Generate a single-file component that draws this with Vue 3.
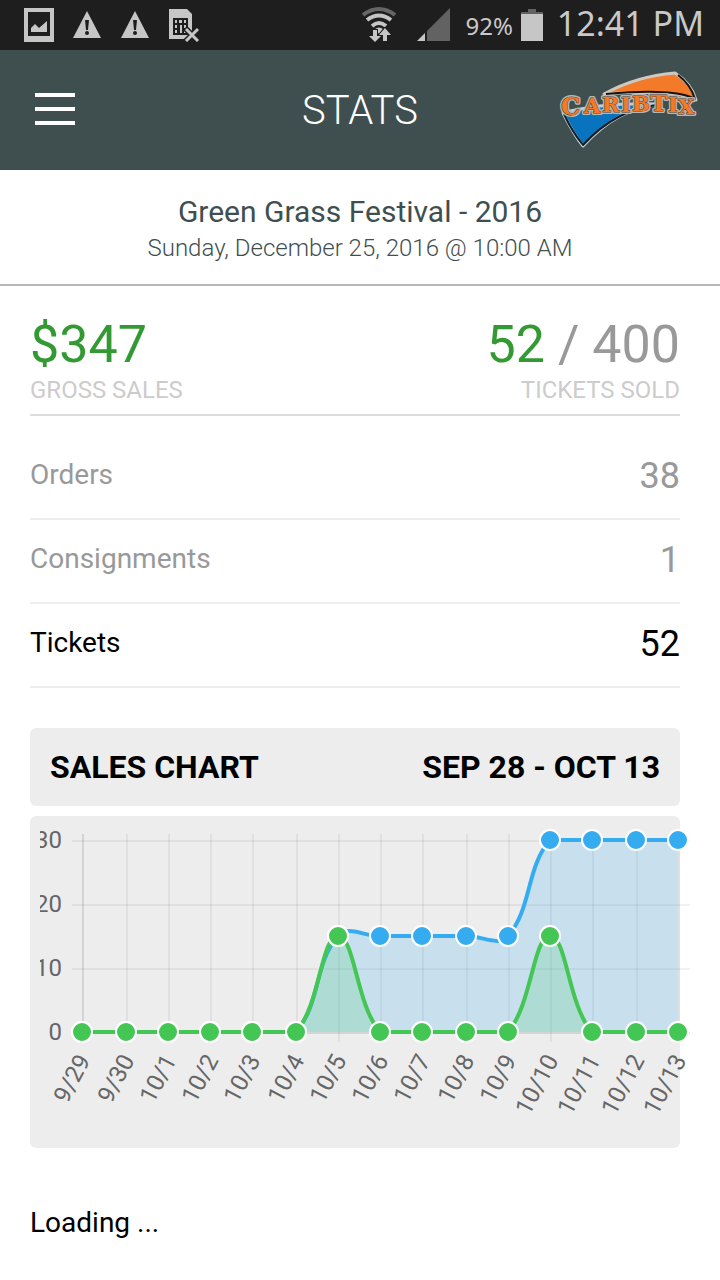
<script setup>
const stats = [
  { label: 'Orders', value: 38 },
  { label: 'Consignments', value: 1 },
  { label: 'Tickets', value: 52, active: true },
]

const days = ['9/29', '9/30', '10/1', '10/2', '10/3', '10/4', '10/5', '10/6', '10/7', '10/8', '10/9', '10/10', '10/11', '10/12', '10/13']
const totals = [0, 0, 0, 0, 0, 0, 15, 15, 15, 15, 15, 30, 30, 30, 30]
const daily = [0, 0, 0, 0, 0, 0, 15, 0, 0, 0, 0, 15, 0, 0, 0]
const ticks = [30, 20, 10, 0]

const columns = [42, 86, 128, 170, 212, 256, 298, 340, 382, 426, 468, 510, 552, 596, 638]
const left = 42
const right = 638
const top = 14
const bottom = 206
const yAt = (v) => bottom - (v * (bottom - top)) / 30
const toPoints = (values) => values.map((v, i) => ({ x: columns[i], y: yAt(v) }))
const clamp = (y) => Math.min(bottom, Math.max(top, y))

function curve(points) {
  const tension = 0.4
  const controls = points.map((p, i) => {
    const a = points[i - 1] || p
    const b = points[i + 1] || p
    const before = Math.hypot(p.x - a.x, p.y - a.y)
    const after = Math.hypot(b.x - p.x, b.y - p.y)
    const fa = (tension * before) / (before + after)
    const fb = (tension * after) / (before + after)
    return {
      inX: p.x - fa * (b.x - a.x),
      inY: clamp(p.y - fa * (b.y - a.y)),
      outX: p.x + fb * (b.x - a.x),
      outY: clamp(p.y + fb * (b.y - a.y)),
    }
  })
  let d = `M${points[0].x} ${points[0].y}`
  for (let i = 1; i < points.length; i++) {
    const c = controls[i - 1]
    const n = controls[i]
    d += ` C${c.outX} ${c.outY} ${n.inX} ${n.inY} ${points[i].x} ${points[i].y}`
  }
  return d
}

const series = [
  { name: 'total', points: toPoints(totals) },
  { name: 'daily', points: toPoints(daily) },
].map((s) => {
  const line = curve(s.points)
  return { ...s, line, area: `${line} L${right} ${bottom} L${left} ${bottom} Z` }
})
</script>

<template>
  <div class="screen">
    <div class="status">
      <div class="notices">
        <svg width="30" height="34" viewBox="0 0 30 34" aria-hidden="true">
          <path fill="#c6c6c6" fill-rule="evenodd" d="M0 0H30V34H0ZM4 4V28H26V4Z" />
          <path fill="#c6c6c6" d="M7 20L11 16L15 20L23 13V24H7Z" />
        </svg>
        <svg v-for="n in 2" :key="n" width="30" height="34" viewBox="0 0 30 34" aria-hidden="true">
          <path fill="#c6c6c6" d="M15 3L29 30H1Z" />
          <path fill="#1e1e1e" d="M13 12H17L16 22H14Z" />
          <circle cx="15" cy="25" r="2" fill="#1e1e1e" />
        </svg>
        <svg width="32" height="34" viewBox="0 0 32 34" aria-hidden="true">
          <path fill="#c6c6c6" d="M1 1H19L24 6V31H1Z" />
          <path fill="#1e1e1e" d="M5 10H20V27H5Z" />
          <path fill="#c6c6c6" d="M7 12h2v3H7zM7 17h2v3H7zM7 22h2v3H7zM11 12h3v3h-3zM12 17h2v8h-2zM16 12h2v3h-2zM16 17h2v3h-2zM16 22h2v3h-2z" />
          <path stroke="#1e1e1e" stroke-width="6" d="M17 20L31 34M31 20L17 34" />
          <path stroke="#c6c6c6" stroke-width="3" d="M18 21L30 33M30 21L18 33" />
        </svg>
      </div>
      <div class="system">
        <svg class="wifi" width="36" height="38" viewBox="0 0 36 38" fill="none" aria-hidden="true">
          <path stroke="#666" stroke-width="4" d="M2 9Q18 -3 34 9" />
          <path stroke="#c6c6c6" stroke-width="4" d="M6 14Q18 5 30 14M11 20Q18 14 25 20" />
          <path fill="#c6c6c6" d="M14 23Q18 20 22 23L18 28Z" />
          <path stroke="#1e1e1e" stroke-width="2" fill="#c6c6c6" paint-order="stroke" d="M12 24H16V30H20L14 36L8 30H12ZM22 35H26V29H30L24 22L18 29H22Z" />
        </svg>
        <svg class="signal" width="34" height="34" viewBox="0 0 34 34" aria-hidden="true">
          <path fill="#626262" d="M33 0V33H10V23Z" />
          <path fill="#c6c6c6" d="M8 25V33H0Z" />
        </svg>
        <span class="percent">92%</span>
        <svg class="battery" width="22" height="32" viewBox="0 0 22 32" aria-hidden="true">
          <path fill="#626262" d="M7 0H15V3H22V6H0V3H7Z" />
          <path fill="#c6c6c6" d="M0 5H22V32H0Z" />
        </svg>
        <span class="clock">12:41 PM</span>
      </div>
    </div>

    <header class="bar">
      <button class="menu" type="button" aria-label="Menu"><i></i><i></i><i></i></button>
      <h1>STATS</h1>
      <svg class="logo" width="140" height="80" viewBox="0 0 140 80" role="img" aria-label="CaribTix">
        <g stroke-linejoin="round">
          <path fill="#0873be" stroke="#c3cdd1" stroke-width="3" d="M3 43C32 35 66 33 99 34C70 38 47 50 23 76C15 66 9 55 3 43Z" />
          <path fill="none" stroke="#101c28" stroke-width="2" d="M4 44C9 55 15 65 23 75C47 49 70 39 96 35" />
          <path fill="#f27a29" stroke="#cfc8bf" stroke-width="3" d="M44 24C64 13 90 5 115 3C126 10 133 19 136 30C122 23 90 21 44 24Z" />
          <path fill="none" stroke="#17130f" stroke-width="2" d="M46 24C90 20 122 22 135 29C132 19 126 11 118 5" />
        </g>
        <g v-for="layer in ['halo', 'letters']" :key="layer" :class="layer">
          <text x="1" y="45" font-size="24">C</text>
          <text x="24 42 61 72" y="43 42 42 41" font-size="21">ARIB</text>
          <text x="90" y="41" font-size="23">T</text>
          <text x="108 118" y="42 44" font-size="21">IX</text>
        </g>
      </svg>
    </header>

    <section class="event">
      <h2>Green Grass Festival - 2016</h2>
      <p>Sunday, December 25, 2016 @ 10:00 AM</p>
    </section>

    <main>
      <section class="summary">
        <div>
          <strong class="good">$347</strong>
          <span>GROSS SALES</span>
        </div>
        <div class="end">
          <strong><b class="good">52</b> / 400</strong>
          <span>TICKETS SOLD</span>
        </div>
      </section>

      <dl class="stats">
        <div v-for="s in stats" :key="s.label" :class="{ active: s.active }">
          <dt>{{ s.label }}</dt>
          <dd>{{ s.value }}</dd>
        </div>
      </dl>

      <section class="sales">
        <h3><span>SALES CHART</span><span>SEP 28 - OCT 13</span></h3>
        <div class="panel">
          <svg class="chart" viewBox="0 0 650 312" role="img" aria-label="Sales chart">
            <path
              v-for="(x, i) in columns" :key="x" class="grid" :class="{ axis: i === 0 }"
              :d="`M${x + 1} 8V216`"
            />
            <path
              v-for="t in ticks" :key="t" class="grid" :class="{ axis: t === 0 }"
              :d="`M32 ${yAt(t) + 1}H650`"
            />
            <g v-for="s in series" :key="s.name" :class="s.name">
              <path class="area" :d="s.area" />
              <path class="line" :d="s.line" />
              <circle v-for="p in s.points" :key="p.x" :cx="p.x" :cy="p.y" r="10" />
            </g>
            <text v-for="t in ticks" :key="t" x="22" :y="yAt(t) + 8" text-anchor="end">{{ t }}</text>
            <text
              v-for="(d, i) in days" :key="d" text-anchor="end"
              :transform="`translate(${columns[i] + 9} 234) rotate(-62)`"
            >{{ d }}</text>
          </svg>
        </div>
      </section>

      <p class="loading" role="status">Loading ...</p>
    </main>
  </div>
</template>

<style>
body {
  background: #fff;
}
</style>

<style scoped>
.screen {
  font-family: Roboto, "Liberation Sans", sans-serif;
  color: #000;
}
h1, h2, h3, p, dl, dd {
  margin: 0;
  font-weight: 400;
}
svg {
  display: block;
}
.status {
  height: 50px;
  box-sizing: border-box;
  padding: 0 16px 0 24px;
  display: flex;
  justify-content: space-between;
  align-items: center;
  background: #1e1e1e;
  color: #c9c9c9;
  font-family: "Noto Sans", "Open Sans", sans-serif;
}
.notices {
  display: flex;
  gap: 18px;
}
.system {
  display: flex;
  align-items: center;
}
.signal {
  margin-left: 20px;
}
.percent {
  margin-left: 14px;
  font-size: 24px;
}
.battery {
  margin: 0 14px 0 8px;
}
.clock {
  font-size: 34px;
  line-height: 46px;
  padding-bottom: 4px;
}
.bar {
  height: 120px;
  box-sizing: border-box;
  padding: 0 20px;
  display: grid;
  grid-template-columns: 1fr auto 1fr;
  align-items: center;
  background: #3f4f50;
  color: #fff;
}
.menu {
  width: 70px;
  padding: 14px 15px 16px;
  border: 0;
  background: none;
  display: grid;
  gap: 10px;
}
.menu i {
  height: 4px;
  background: #fff;
}
.bar h1 {
  font-size: 40px;
  font-weight: 300;
}
.logo {
  justify-self: end;
  overflow: visible;
}
.halo,
.letters {
  font-family: "DejaVu Serif", serif;
  font-weight: 700;
  fill: #f27a29;
  stroke-linejoin: round;
  paint-order: stroke;
}
.halo {
  stroke: #b4b8b4;
  stroke-width: 4px;
}
.letters {
  stroke: #5a3a26;
  stroke-width: 1px;
}
.event {
  padding: 24px 20px 18px;
  border-bottom: 2px solid #b4b8b8;
  text-align: center;
  color: #3f4f50;
}
.event h2 {
  font-size: 30px;
  line-height: 36px;
}
.event p {
  font-size: 24px;
  line-height: 36px;
  font-weight: 300;
}
main {
  padding: 28px 40px 40px 30px;
}
.summary {
  display: flex;
  justify-content: space-between;
  padding-bottom: 10px;
  border-bottom: 2px solid #ddd;
  color: #999;
}
.summary div {
  display: grid;
}
.summary strong {
  font-size: 52px;
  line-height: 62px;
  font-weight: 400;
}
.summary b {
  font-weight: 400;
}
.summary .good {
  color: #339933;
}
.summary span {
  font-size: 24px;
  line-height: 28px;
  color: #ccc;
}
.end {
  text-align: right;
}
.stats {
  margin-top: 20px;
}
.stats div {
  height: 84px;
  box-sizing: border-box;
  padding-bottom: 2px;
  display: flex;
  justify-content: space-between;
  align-items: center;
  border-bottom: 2px solid #eee;
  color: #999;
}
.stats dt {
  padding-bottom: 4px;
  font-size: 28px;
}
.stats dd {
  font-size: 36px;
}
.stats .active {
  color: #000;
}
.sales {
  margin-top: 40px;
  display: grid;
  gap: 10px;
}
.sales h3 {
  padding: 20px;
  display: flex;
  justify-content: space-between;
  border-radius: 6px;
  background: #ededed;
  font-size: 32px;
  line-height: 38px;
  font-weight: 700;
}
.panel {
  padding: 10px 0;
  border-radius: 6px;
  background: #ededed;
}
.chart {
  width: 100%;
  margin-left: 10px;
  font-size: 24px;
  fill: #666;
}
.grid {
  stroke: rgba(0, 0, 0, 0.05);
  stroke-width: 2px;
}
.axis {
  stroke: rgba(0, 0, 0, 0.1);
}
.line {
  fill: none;
  stroke-width: 4px;
}
.chart circle {
  stroke: #fff;
  stroke-width: 2px;
}
.total .area {
  fill: rgba(54, 172, 240, 0.2);
}
.total .line {
  stroke: #36acf0;
}
.total circle {
  fill: #36acf0;
}
.daily .area {
  fill: rgba(70, 205, 110, 0.2);
}
.daily .line {
  stroke: #44c655;
}
.daily circle {
  fill: #44c655;
}
.loading {
  margin-top: 56px;
  font-size: 28px;
  line-height: 38px;
}
</style>
